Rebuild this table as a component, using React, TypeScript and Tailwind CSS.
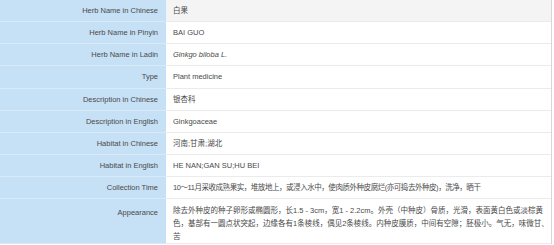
const rows: { label: string; value: React.ReactNode; tall?: boolean; tight?: boolean }[] = [
  { label: 'Herb Name in Chinese', value: '白果' },
  { label: 'Herb Name in Pinyin', value: 'BAI GUO' },
  { label: 'Herb Name in Ladin', value: <i>Ginkgo biloba L.</i> },
  { label: 'Type', value: 'Plant medicine' },
  { label: 'Description in Chinese', value: '银杏科' },
  { label: 'Description in English', value: 'Ginkgoaceae' },
  { label: 'Habitat in Chinese', value: '河南;甘肃;湖北' },
  { label: 'Habitat in English', value: 'HE NAN;GAN SU;HU BEI' },
  {
    label: 'Collection Time',
    value: '10～11月采收成熟果实，堆放地上，或浸入水中，使肉质外种皮腐烂(亦可捣去外种皮)，洗净，晒干',
    tight: true,
  },
  {
    label: 'Appearance',
    value: '除去外种皮的种子卵形或椭圆形，长1.5 - 3cm，宽1 - 2.2cm。外壳（中种皮）骨质，光滑，表面黄白色或淡棕黄色，基部有一圆点状突起，边缘各有1条棱线，偶见2条棱线。内种皮膜质，中间有空隙；胚极小。气无，味微甘、苦',
    tall: true,
  },
];

export default function App() {
  return (
    <div className="w-[554px] h-[245px] overflow-hidden bg-white font-['Liberation_Sans','Noto_Sans_CJK_SC',sans-serif] text-[7.5px] text-[#4a4a4a]">
      <div className="w-[552px] border-r border-[#d6d6d6]">
        {rows.map((r, i) => (
          <div
            key={r.label}
            className={`grid grid-cols-[166px_1fr] ${r.tall ? 'h-[44.3px]' : 'h-[22.15px]'} ${i === 0 ? 'bg-[#f4f4f4]' : 'bg-white'}`}
          >
            <div className="flex items-start justify-end bg-[#c6e0f6] border-b border-[#d8e9f8] pr-[8px]">
              <span className={r.tall ? 'pt-[8px]' : 'self-center'}>{r.label}</span>
            </div>
            <div
              className={`flex border-b border-[#ebebeb] pl-[7px] pr-0 leading-[13px] ${r.tall ? 'items-start pt-[5px]' : 'items-center'}`}
            >
              <span className={`break-all ${r.tight ? 'tracking-[-0.45px]' : ''}`}>{r.value}</span>
            </div>
          </div>
        ))}
      </div>
    </div>
  );
}
